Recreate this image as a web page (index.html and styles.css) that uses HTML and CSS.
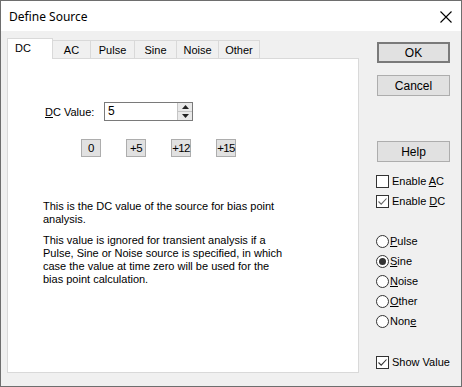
FILE: index.html
```html
<!DOCTYPE html>
<html>
<head>
<meta charset="utf-8">
<link rel="stylesheet" href="styles.css">
</head>
<body>
<div class="win">
  <div class="titlebar">
    <span class="title">Define Source</span>
    <svg class="close" width="12" height="12" viewBox="0 0 12 12"><path d="M0.5 0.5 L11.5 11.5 M11.5 0.5 L0.5 11.5" stroke="#000" stroke-width="1.1" fill="none"/></svg>
  </div>
  <div class="content">
    <div class="left">
      <div class="tabstrip">
        <div class="tab sel t-dc">DC</div>
        <div class="tab t-ac">AC</div>
        <div class="tab t-pulse">Pulse</div>
        <div class="tab t-sine">Sine</div>
        <div class="tab t-noise">Noise</div>
        <div class="tab t-other">Other</div>
      </div>
      <div class="panel">
        <div class="valrow">
          <span class="vlabel"><u>D</u>C Value:</span>
          <div class="field">
            <span class="fval">5</span>
            <div class="spin">
              <div class="sp up"><svg width="7" height="4" viewBox="0 0 7 4"><path d="M3.5 0 L7 4 L0 4 Z" fill="#222"/></svg></div>
              <div class="sp dn"><svg width="7" height="4" viewBox="0 0 7 4"><path d="M0 0 L7 0 L3.5 4 Z" fill="#222"/></svg></div>
            </div>
          </div>
        </div>
        <div class="quick">
          <div class="qb">0</div>
          <div class="qb">+5</div>
          <div class="qb">+12</div>
          <div class="qb">+15</div>
        </div>
        <p class="desc">This is the DC value of the source for bias point<br>analysis.</p>
        <p class="desc second">This value is ignored for transient analysis if a<br>Pulse, Sine or Noise source is specified, in which<br>case the value at time zero will be used for the<br>bias point calculation.</p>
      </div>
    </div>
    <div class="right">
      <div class="btn ok">OK</div>
      <div class="btn cancel">Cancel</div>
      <div class="btn help">Help</div>
      <div class="opt chk-first"><span class="cb"></span><span>Enable <u>A</u>C</span></div>
      <div class="opt"><span class="cb on"><svg width="11" height="11" viewBox="0 0 11 11"><path d="M1.5 5.5 L4.2 8.2 L9.5 2.5" stroke="#666" stroke-width="1.1" fill="none"/></svg></span><span>Enable <u>D</u>C</span></div>
      <div class="opt radio-first"><span class="rb"></span><span><u>P</u>ulse</span></div>
      <div class="opt"><span class="rb on"></span><span><u>S</u>ine</span></div>
      <div class="opt"><span class="rb"></span><span><u>N</u>oise</span></div>
      <div class="opt"><span class="rb"></span><span><u>O</u>ther</span></div>
      <div class="opt"><span class="rb"></span><span>Non<u>e</u></span></div>
      <div class="opt show"><span class="cb on"><svg width="11" height="11" viewBox="0 0 11 11"><path d="M1.5 5.5 L4.2 8.2 L9.5 2.5" stroke="#333" stroke-width="1.1" fill="none"/></svg></span><span>Show Value</span></div>
    </div>
  </div>
</div>
</body>
</html>
```
FILE: styles.css
```css
* { box-sizing: border-box; }
html, body { margin: 0; padding: 0; }
body {
  width: 462px;
  height: 387px;
  font-family: "Liberation Sans", Arial, sans-serif;
  font-size: 11px;
  color: #000;
  background: #f0f0f0;
}
u { text-decoration: underline; text-underline-offset: 1px; }
.win {
  width: 462px;
  height: 387px;
  border: 1px solid #6e6e6e;
  display: flex;
  flex-direction: column;
  background: #f0f0f0;
}
.titlebar {
  height: 30px;
  background: #fff;
  display: flex;
  align-items: center;
  justify-content: space-between;
  padding: 0 9px 0 8px;
  flex: none;
}
.title {
  font-family: "Noto Sans", "Open Sans", sans-serif;
  font-size: 12px;
  margin-top: 1px;
}
.close { margin-top: 1px; }
.content {
  display: flex;
  padding: 7px 0 0 6px;
}
.left { width: 352px; flex: none; }
.tabstrip {
  display: flex;
  align-items: flex-end;
  height: 20px;
}
.tab {
  height: 18px;
  border-top: 1px solid #d9d9d9;
  border-right: 1px solid #d9d9d9;
  background: #f0f0f0;
  display: flex;
  align-items: center;
  justify-content: center;
  padding-top: 1px;
  white-space: nowrap;
}
.tab.sel {
  height: 21px;
  margin-bottom: -1px;
  background: #fff;
  border: 1px solid #d9d9d9;
  border-bottom: none;
  position: relative;
  z-index: 1;
  justify-content: flex-start;
  padding: 0 0 2px 7px;
}
.t-dc { width: 46px; }
.t-ac { width: 38px; }
.t-pulse { width: 44px; }
.t-sine { width: 42px; }
.t-noise { width: 42px; }
.t-other { width: 41px; }
.panel {
  height: 315px;
  background: #fff;
  border: 1px solid #d9d9d9;
  padding: 43px 0 0 37px;
}
.valrow {
  display: flex;
  align-items: center;
  height: 19px;
}
.vlabel { width: 59px; flex: none; white-space: nowrap; }
.field {
  width: 89px;
  height: 19px;
  flex: none;
  border: 1px solid #7a7a7a;
  display: flex;
  align-items: stretch;
  justify-content: space-between;
  background: #fff;
}
.fval { padding: 1px 0 0 3px; line-height: 15px; font-size: 12px; }
.spin {
  width: 15px;
  display: flex;
  flex-direction: column;
  border-left: 1px solid #c5c5c5;
  background: #e9e9e9;
}
.sp {
  flex: 1;
  display: flex;
  align-items: center;
  justify-content: center;
}
.sp.up { border-bottom: 1px solid #c5c5c5; }
.quick {
  display: flex;
  gap: 25px;
  margin: 18px 0 0 36px;
}
.qb {
  width: 20px;
  height: 18px;
  background: #e1e1e1;
  border: 1px solid #adadad;
  display: flex;
  align-items: center;
  justify-content: center;
  font-size: 11.5px;
  letter-spacing: -0.6px;
  white-space: nowrap;
}
.desc {
  margin: 43px 0 0 -2px;
  line-height: 13px;
  white-space: nowrap;
}
.desc.second { margin-top: 8px; }
.right {
  width: 75px;
  margin-left: 17px;
  display: flex;
  flex-direction: column;
  padding-left: 1px;
}
.btn {
  width: 73px;
  height: 21px;
  background: #e1e1e1;
  border: 1px solid #adadad;
  display: flex;
  align-items: center;
  justify-content: center;
  font-size: 12px;
}
.btn.ok { margin-top: 4px; border: 2px solid #7a7a7a; }
.btn.cancel { margin-top: 12px; }
.btn.help { margin-top: 45px; }
.opt {
  height: 20px;
  display: flex;
  align-items: center;
  margin-left: -1px;
  font-size: 11px;
  white-space: nowrap;
}
.opt.chk-first { margin-top: 9px; }
.opt.radio-first { margin-top: 20px; }
.opt.show { margin-top: 21px; }
.cb {
  width: 13px;
  height: 13px;
  border: 1px solid #333;
  background: #fff;
  margin-right: 3px;
  display: flex;
  align-items: center;
  justify-content: center;
  flex: none;
}
.rb {
  width: 13px;
  height: 13px;
  border: 1px solid #333;
  border-radius: 50%;
  background: #fff;
  margin-right: 1px;
  display: flex;
  align-items: center;
  justify-content: center;
  flex: none;
}
.rb.on::after {
  content: "";
  width: 7px;
  height: 7px;
  border-radius: 50%;
  background: #333;
}
```
